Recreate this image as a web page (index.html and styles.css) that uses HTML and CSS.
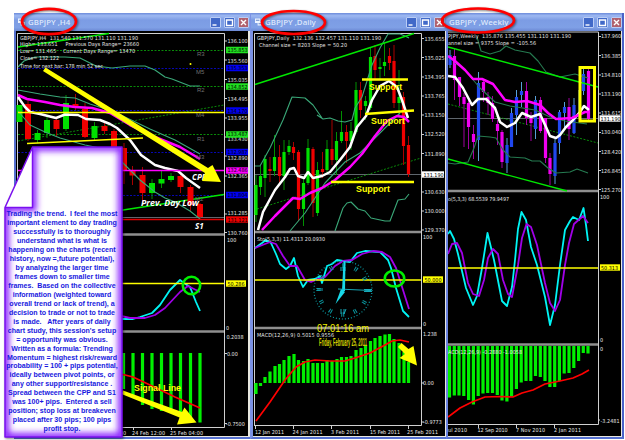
FILE: index.html
```
<!DOCTYPE html>
<html lang="en">

<head>
    <meta charset="utf-8" />
    <title>GBPJPY charts</title>
    <link rel="stylesheet" href="styles.css">
</head>

<body>
    <div class="desktop">
        <!-- H4 window -->
        <section class="window h4">
            <header class="titlebar">
                <svg class="app-icon" viewBox="0 0 8 8"><path d="M0 0h6v5H0zM3 4h5v4H3z" fill="#eef4ff"/><path d="M1 2h4M4 6h3" stroke="#5378bd"/></svg>
                <h2>GBPJPY ,H4</h2>
                <span class="btn"><svg viewBox="0 0 11 11"><path d="M2.5 8h4"/></svg></span>
                <span class="btn"><svg viewBox="0 0 11 11"><path d="M2.5 3h6v5.5h-6z"/></svg></span>
                <span class="btn close"><svg viewBox="0 0 11 11"><path d="M3 3l5 5M8 3l-5 5"/></svg></span>
            </header>
            <svg class="chart" viewBox="16 31 232 405" width="232" height="405">
                <path class="sep" d="M17 234.5H224M17 331.5H224"/>
                <path class="frame" d="M17.5 427V33.5H224.5V427.5H17"/>
                <path class="price" d="M18 217.5H224"/>
                <path class="pivot green" d="M18 50.5H224M18 86.5H224M18 134.5H224"/>
                <path class="pivot blue" d="M18 68.5H224M18 110.5H224M18 152.5H224M18 195.5H224"/>
                <path class="pivot green" d="M18 141L224 105"/>
                <path class="trend" d="M18 47L109 33.5M110 212L224 194.5"/>
                <path class="wick up" d="M37.5 130V143M47 117V138M66 95V131M94.500 122V141M152 179V199M161.500 171V188M171 173V182"/>
                <path class="wick down" d="M28 98V141M56.500 117V136M75.500 94V110M85 103V138M104.500 123V134M114 129V150M124 143V184M132.500 166V185M142.500 167V202M180.500 172V193M190.500 185V212M200 203V219"/>
                <path class="body up wide" d="M19.500 105V122M37.500 133V140M47 120V133M66 103V129M94.500 126V138M152 183V193M161.500 179V183.500M171 176V180"/>
                <path class="body down wide" d="M28 104V139M56.500 120V129M75.500 104V108M85 109V137M104.500 126V131M114 131V147M124 148V170M132.500 171V175.500M142.500 175V193M180.500 176V187M190.500 187V205M200 204V217"/>
                <path class="band" d="M18 67L24 61 35 57H65L80 58 86 61 96 66 112 68 130 66H145L155 70 165 77 172 79 190 86H200"/>
                <path class="band" d="M18 90L40 94 60 97 75 98 90 104 115 112 125 117 150 129 175 140 200 154"/>
                <path class="band" d="M18 111L30 125 45 132 60 138 85 145 110 150 122 162 140 180 155 192 165 198 175 202 190 211 200 219"/>
                <path class="ma magenta" d="M18 95L27 99 45 102 60 105 75 107 92 108 110 113 130 125 155 137 180 147 200 159"/>
                <path class="ma white" d="M18 97L25 107 30 112 40 114 56 118 65 114.500 78 115 86 119 100 120 110 124 117 128 130 140 141 155 155 165 165 168 178 171 186 178 200 188"/>
                <path class="hline magenta" d="M18 170.500H224"/>
                <path class="hline yellow" d="M18 112.500H224"/>
                <path class="hline red" d="M18 219.500H224"/>
                <path class="hline yellow" d="M27 143.500L143 138"/>
                <g class="info">
                    <text x="20" y="40" textLength="118">GBPJPY,H4&#160; 131.540 131.570 131.110 131.190</text>
                    <text x="20" y="46.300" textLength="119">High= 133.651 &#160;&#160;&#160; Previous Days Range= 23660</text>
                    <text x="20" y="53.300" textLength="115">Low= 131.465 &#160;&#160; Current Days Range= 13470</text>
                    <text x="20" y="60.300" textLength="39">Close= 132.122</text>
                    <text x="20" y="67.600" textLength="83">Time for next bar: 178 min 52 sec</text>
                </g>
                <g class="pivot-name">
                    <text x="197" y="56">R3</text><text x="196" y="74">M5</text><text x="197" y="92">R2</text>
                    <text x="196" y="117">M4</text><text x="197" y="140.500">R1</text><text x="196" y="158.500">M3</text><text x="195" y="201">M2</text>
                </g>
                <circle cx="190.500" cy="64" r="1" fill="#ff0"/>
                <g class="caption pale">
                    <text x="192" y="179.500">CPP</text>
                    <text x="141" y="205.500" textLength="58" lengthAdjust="spacingAndGlyphs">Prev. Day Low</text>
                    <text x="195" y="228.500">S1</text>
                </g>
                <path class="arrow" d="M45.500 67.500L208 168 212.500 165 221 182 202 181 205 173 43 71z"/>
                <path class="osc cyan" d="M110 312L121 319H133L140 317 152 313 160 305 170 290 180 280 184 283 190 287 196 302 200 311"/>
                <path class="osc purple" d="M110 312L121 316 130 318H145L155 315 165 308 180 292 188 286 200 292"/>
                <path class="hline yellow" d="M18 283.500H224"/>
                <circle class="ring" cx="191.500" cy="285.500" r="8.700"/>
                <path class="bar" d="M123.500 353V389M133 353V395M142.500 353V405M152 353V409M161.500 353V411M171 353V412M180.500 353V414M190.500 353V418M200 353V422.500"/>
                <path class="signal" d="M115 373L121 374 133 377 150 385 175 397 200 408"/>
                <path class="arrow" d="M123 390.500L182 412 184.500 407.500 196.500 422.500 177 424.500 179.500 417.500 121.500 394z"/>
                <text class="caption" x="134" y="390.500" textLength="47" lengthAdjust="spacingAndGlyphs">Signal Line</text>
                <path class="tick" d="M224 41h3M224 60h3M224 79.500h3M224 98.500h3M224 118h3M224 137h3M224 156h3M224 176h3M224 214h3M224 232.500h3M224 353.500h3M224 423.500h3M133.500 427v3M171.500 427v3"/>
                <g class="axis">
                    <text x="227.500" y="43">136.100</text><text x="227.500" y="62.500">135.560</text><text x="227.500" y="81.500">135.035</text>
                    <text x="227.500" y="100.500">134.495</text><text x="227.500" y="120">133.955</text><text x="227.500" y="141">133.430</text>
                    <text x="227.500" y="159.500">132.890</text><text x="227.500" y="178">132.365</text><text x="227.500" y="215">131.285</text>
                    <text x="227.500" y="234.700">130.760</text><text x="227" y="241.500">100</text><text x="226" y="329.500">0</text>
                    <text x="226.500" y="339">0.2038</text><text x="227" y="355.500">0.00</text><text x="226" y="425.500">-0.7500</text>
                    <text x="120" y="434.500">00</text><text x="132" y="434.500" textLength="33">24 Feb 12:00</text><text x="170" y="434.500" textLength="33">25 Feb 04:00</text>
                </g>
                <path class="tag green" d="M226 50h22M226 86.500h22M226 134.500h22"/>
                <path class="tag blue" d="M226 68h22M226 110.500h22M226 152h22M226 195h22"/>
                <path class="tag magenta" d="M226 170.500h22"/>
                <path class="tag red" d="M226 219.500h22"/>
                <path class="tag yellow" d="M226 283.500h20"/>
                <g class="axis dark">
                    <text x="227.500" y="52">135.853</text><text x="227.500" y="70">135.353</text><text x="227.500" y="88.500">134.852</text>
                    <text x="227.500" y="112.500">134.170</text><text x="227.500" y="136">133.487</text><text x="227.500" y="154">132.987</text>
                    <text x="227.500" y="172">132.486</text><text x="227.500" y="197">131.804</text><text x="227.500" y="221.500">131.121</text>
                    <text x="227.500" y="285.500">50.286</text>
                </g>
            </svg>
        </section>

        <!-- Daily window -->
        <section class="window daily">
            <header class="titlebar">
                <svg class="app-icon" viewBox="0 0 8 8"><path d="M0 0h6v5H0zM3 4h5v4H3z" fill="#eef4ff"/><path d="M1 2h4M4 6h3" stroke="#5378bd"/></svg>
                <h2>GBPJPY ,Daily</h2>
                <span class="btn"><svg viewBox="0 0 11 11"><path d="M2.5 8h4"/></svg></span>
                <span class="btn"><svg viewBox="0 0 11 11"><path d="M2.5 3h6v5.5h-6z"/></svg></span>
                <span class="btn close"><svg viewBox="0 0 11 11"><path d="M3 3l5 5M8 3l-5 5"/></svg></span>
            </header>
            <svg class="chart" viewBox="253 31 192 405" width="192" height="405">
                <path class="sep" d="M254 232H421M254 328H421"/>
                <path class="frame" d="M254.500 426V33.500H421.500V425.500H254"/>
                <path class="price" d="M255 174.500H421"/>
                <path class="pivot green" d="M257 209L421 158"/>
                <path class="wick up" d="M256 175V222M260.500 166V195M265 155V197M274.500 135V176M284 140V190M289 140V155M303.500 177V226M308 139V185M317.500 162V216M327 140V172M336.500 132V175M341.500 111V143M351 122V150M356 82V134M365.500 96V120M370.500 48V110M380 58V79M384.500 43V76M399 70V118"/>
                <path class="wick down" d="M270 157V182M279.500 145V184M293.500 142V160M298.500 150V221M313 147V217M322.500 152V178M332 120V165M346.500 125V163M360.500 82V118M375 45V80M389.500 48V70M394 45V108M403.500 92V165M408.500 136V177"/>
                <path class="body up" d="M256 185V215M260.500 176V187M265 159V178M274.500 157V171M284 152V176M289 146V152M303.500 183V209M308 148V183M317.500 170V213M327 149V170M336.500 141V160M341.500 132V141M351 131V141M356 90V132M365.500 101V106M370.500 57V108M380 67V69M384.500 62V66M399 97V103"/>
                <path class="body down" d="M270 169V171M279.500 157V176M293.500 147V153M298.500 152V209M313 149V203M322.500 169V172M332 149V160M346.500 132V141M360.500 90V110M375 56V70M389.500 56V63M394 61V103M403.500 97V146M408.500 145V174"/>
                <path class="band" d="M255 166H260L270 148 283 120 292 97 305 98 313 105 322 118M317 115L323 119 330 118 338 121 345 122 352 120 355 108 362 97 372 65 380 48 388 34H400L405 36 409 38"/>
                <path class="band" d="M290 231L305 213 325 183 345 162 360 153 375 138 390 123 400 113"/>
                <path class="band" d="M335 231L343 208 347 203 351 202 358 209 365 211 371 218 385 221H390L398 200 405 199 409 194"/>
                <path class="trend" d="M255 84.500L414 33.500"/>
                <path class="ma magenta" d="M262 230L275 216 293 198 300 199 310 193 322 188 335 180 350 167 362 154 375 136 387 121 397 116 404 117 409 122"/>
                <path class="ma white" d="M258 230L263 212 275 190 285 177 290 169 294 168 298 176 304 178 308 172 313 178 322 176 330 172 340 160 350 147 357 127 366 116 372 100 380 86 389 81 397 87 402 100 408 118"/>
                <path class="hline yellow thick" d="M362 79.500H408M365 114L414 110.500M331 182H414"/>
                <g class="caption">
                    <text x="369" y="90" textLength="33" lengthAdjust="spacingAndGlyphs">Support</text>
                    <text x="371" y="123.500" textLength="34" lengthAdjust="spacingAndGlyphs">Support</text>
                    <text x="356" y="191.500" textLength="34" lengthAdjust="spacingAndGlyphs">Support</text>
                </g>
                <!-- stochastic with the desktop clock on top -->
                <path class="osc cyan" d="M255 248L262 243 266 240 271 243 276 254 280 264 286 269 290 266 294 258 298 276 303 287 308 280 315 279 320 276 322 283 327 266 332 264 337 260 343 261 350 262 357 253 365 251 380 252 388 260 391 268 396 288 403 311 409 317"/>
                <path class="osc purple" d="M255 248L270 242 276 244 283 256 290 266 297 266 305 280 311 282 318 279 325 277 335 266 343 261 352 260 362 254 373 251 382 252 390 257 396 268 403 290 409 309"/>
                <path class="hline yellow" d="M255 280H421"/>
                <g class="clock">
                    <circle class="minutes" cx="343" cy="290" r="29"/>
                    <circle class="numerals" cx="343" cy="290" r="24.500"/>
                    <path class="thin" d="M341 267v4M343 267v4M345 267v4M341 309v5M344 309v5M346 309l-2 5M318 288v3M320 288v3M322 288v3M364 289.500h8M364 291.500h8"/>
                    <path class="hand" d="M343.500 261H345.500L345 291H342z"/>
                    <path class="hand" d="M341 289L345 292 335.500 304z"/>
                    <path class="thin" d="M338 289L371 290.500"/>
                </g>
                <ellipse class="ring" cx="394.500" cy="278.500" rx="9.700" ry="8"/>
                <path class="bar" d="M256 383V394M260.500 383V386M265 383V377M270 383V371.500M275 383V366M279.500 383V364M284 383V360M289 383V356M294 383V354M298.500 383V360M303.500 383V361M308 383V359M313 383V363M317.500 383V363M322.500 383V363M327 383V360M332 383V361M337 383V359M341.500 383V357M346.500 383V357M351 383V356M356 383V350M361 383V348M365.500 383V346M370.500 383V341M375 383V338M380 383V336M385 383V334.500M389.500 383V334M394 383V339M399 383V343M404 383V352M408.500 383V362"/>
                <path class="signal" d="M256 421L270 402 285 380 296 367 305 362 315 360 330 361 345 361 355 358 370 353 385 345 392 341 400 340 409 342"/>
                <path class="arrow" d="M401.500 343L408.500 349 413.500 346 417 365.500 399.500 358 405 354 398 347z"/>
                <text class="time" x="317" y="331.500" textLength="52" lengthAdjust="spacingAndGlyphs">07:01:16 am</text>
                <text class="date" x="319" y="345.500" textLength="48" lengthAdjust="spacingAndGlyphs">Friday, February 25, 2011</text>
                <g class="info">
                    <text x="257" y="40" textLength="124">GBPJPY,Daily&#160; 132.136 132.457 131.110 131.190</text>
                    <text x="259" y="46.500" textLength="88">Channel size = 8203 Slope = 50.20</text>
                    <text x="257" y="240.500" textLength="68">Sto(5,3,3) 11.4313 20.0930</text>
                    <text x="257" y="337" textLength="77">MACD(12,26,9) 0.5015 0.9556</text>
                </g>
                <path class="tick" d="M421 38.500h3M421 57.500h3M421 77h3M421 96h3M421 115h3M421 134.500h3M421 153.500h3M421 192h3M421 211h3M421 230h3M421 383h3M421 422h3M255.500 426v3M293.500 426v3M331.500 426v3M370.500 426v3M408.500 426v3"/>
                <path class="tag pale" d="M422 174.500h22"/>
                <path class="tag yellow" d="M423 279.500h20"/>
                <g class="axis">
                    <text x="424.500" y="40.500">135.655</text><text x="424.500" y="59.500">135.025</text><text x="424.500" y="78.700">134.395</text>
                    <text x="424.500" y="98">133.765</text><text x="424.500" y="117">133.150</text><text x="424.500" y="136.300">132.520</text>
                    <text x="424.500" y="155.500">131.890</text><text x="424.500" y="193.700">130.630</text><text x="424.500" y="212.700">130.000</text>
                    <text x="424.500" y="232">129.370</text><text x="423" y="239">100</text><text x="423" y="325.500">0</text>
                    <text x="423" y="335.500">1.238</text><text x="423" y="385">0.00</text><text x="423" y="424">-0.9773</text>
                    <text x="255" y="434" textLength="29">12 Jan 2011</text><text x="292.500" y="434" textLength="30">24 Jan 2011</text>
                    <text x="331" y="434" textLength="28">3 Feb 2011</text><text x="370" y="434" textLength="30">15 Feb 2011</text><text x="407" y="434" textLength="31">25 Feb 2011</text>
                </g>
                <g class="axis dark">
                    <text x="423.500" y="176.500">131.190</text><text x="424.500" y="281.700">50.000</text>
                </g>
            </svg>
        </section>

        <!-- Weekly window -->
        <section class="window weekly">
            <header class="titlebar">
                <h2>GBPJPY ,Weekly</h2>
                <span class="btn"><svg viewBox="0 0 11 11"><path d="M2.5 8h4"/></svg></span>
                <span class="btn"><svg viewBox="0 0 11 11"><path d="M2.5 3h6v5.5h-6z"/></svg></span>
                <span class="btn close"><svg viewBox="0 0 11 11"><path d="M3 3l5 5M8 3l-5 5"/></svg></span>
            </header>
            <svg class="chart" viewBox="448 31 173 405" width="173" height="405">
                <path class="sep" d="M448 191H598M448 344.500H598"/>
                <path class="frame" d="M448 32H598.500V424.500H448"/>
                <path class="price" d="M448 118.500H598"/>
                <path class="pivot green" d="M448 104L598 143"/>
                <path class="wick sky" d="M450 50V68M478.500 72V161M507 138V173M511.500 108V147M516.500 90V135M521.500 82V107M535.500 96V139M555 139V184M559.500 110V154M564.500 102V129M574 98V134M579 90V118M583.500 68V95"/>
                <path class="wick plum" d="M454.500 48V100M459.500 77V106M464 93V147M468.500 98V149M473.500 125V159M483.500 80V102M488 92V115M492.500 96V122M497.500 120V145M502 130V168M526.500 82V125M531 112V141M540.500 97V133M545.500 118V163M550 153V185M569 98V140M588.500 68V120"/>
                <path class="body navy" d="M450 55V65M478.500 83V140M507 145V163M511.500 113V147M516.500 97V115M521.500 91V95M535.500 100V129M555 143V176M559.500 112V143M564.500 107V113M574 105V133M583.500 74V91"/>
                <path class="body pink" d="M454.500 56V80M459.500 77V97M464 97V104M468.500 103V127M473.500 134V142M483.500 82V92M488 97V103M492.500 103V119M497.500 124V131M502 132V162M526.500 91V118M531 118V123M540.500 100V131M545.500 118V158M550 158V174M569 107V129M588.500 71V119"/>
                <path class="band dim" d="M477 37L481 51 490 54 500 51 506 46 515 50 530 53 538 61 546 72 560 77 575 74 588 78"/>
                <path class="band dim" d="M455 63L463 68 480 88 495 102 510 106 535 110 550 117 565 121 587 124"/>
                <path class="band dim" d="M448 163L455 164 468 162 474 148 478 136 490 137 496 138 503 150 510 157 525 158 532 161 540 161 548 168 556 173 570 172 577 169 588 173"/>
                <path class="trend" d="M448 47L598 87M448 159L567 191"/>
                <path class="ma white" d="M448 76L455 77 463 88 472 105 478 99 486 99 495 108 500 122 507 127 515 123 522 113 531 117 540 114 546 127 550 136 556 138 560 135 566 127 573 120 580 112 584 106 589 110"/>
                <path class="ma magenta" d="M448 56L455 61 465 70 473 79 482 79 493 84 505 100 515 102 527 101 540 105 548 113 556 119 572 118 585 112 590 112"/>
                <path class="box" d="M580 67.500H594.500V121H580z"/>
                <path class="osc cyan" d="M448 234L450 231 454 239 458 254 466 288 473 305 477 296 482 268 487.500 233 494 260 502 301 507 306 512 287 515 260 518 229 521.500 212 526 220 531 247 537 265 545 297 550 325 555 305 560 265 565 230 570 221 573 217 579 220 583.500 208 586 225 588 241"/>
                <path class="osc purple" d="M448 254L452 244 457 243 462 253 468 283 473 294 479 296 484 280 488 258 493 249 498 254 503 280 508 294 512 297 518 265 522 238 526.500 224 531 227 537 245 545 283 550 303 555 311 560 300 565 265 569 243 574 224 583 216 588 223"/>
                <path class="hline yellow" d="M448 268H598"/>
                <path class="bar" d="M449.500 346V397.500M454.300 346V395.500M459 346V395.500M463.800 346V396M468.600 346V400M473.400 346V404.500M478.200 346V396M483 346V393.500M487.700 346V393M492.500 346V393M497.300 346V395M502 346V400.500M506.900 346V401.500M511.600 346V396.500M516.400 346V389M521.200 346V382.500M526 346V381M530.800 346V381M535.500 346V376M540.300 346V377M545 346V381M549.900 346V387M554.700 346V387M559.400 346V381M564.200 346V373.500M569 346V373M573.800 346V368M578.600 346V361M583.300 346V353M588 346V353.500"/>
                <path class="signal" d="M448 417L460 408 472 402 485 397 500 396.500 513 397 522 393 533 390 545 384 560 381 573 378 582 374 589 370"/>
                <g class="info">
                    <text x="448" y="38" textLength="123">PJPY,Weekly&#160; 135.876 135.455 131.110 131.190</text>
                    <text x="448" y="44.500" textLength="88">annel size = 9375 Slope = -105.56</text>
                    <text x="448" y="200.500" textLength="61">o(5,3,3) 68.5539 79.9497</text>
                    <text x="448" y="353.500" textLength="74">ACD(12,26,9) -0.2880 -1.0058</text>
                </g>
                <path class="tick" d="M598 36.500h3M598 55.500h3M598 75h3M598 94h3M598 113h3M598 132.500h3M598 151.500h3M598 170.500h3M598 189.500h3M598 420h2M478.500 425v3M516.500 425v3M554.500 425v3"/>
                <g class="axis">
                    <text x="601" y="38.300">137.960</text><text x="601" y="57.500">136.385</text><text x="601" y="76.700">134.810</text>
                    <text x="601" y="96">133.190</text><text x="601" y="114.500">131.615</text><text x="601" y="134.300">130.040</text>
                    <text x="601" y="153.500">128.420</text><text x="601" y="172.500">126.845</text><text x="601" y="191.500">125.270</text>
                    <text x="600" y="198.700">100</text><text x="600" y="341.500">0</text><text x="600" y="351">0</text><text x="600.500" y="422.500" textLength="19">-3.2481</text>
                    <text x="448" y="432" textLength="19">ul 2010</text><text x="477.500" y="432" textLength="30">12 Sep 2010</text>
                    <text x="516" y="432" textLength="29">7 Nov 2010</text><text x="554" y="432" textLength="27">2 Jan 2011</text>
                </g>
                <path class="tag pale" d="M599.500 118.500h21"/>
                <path class="tag yellow" d="M600 267.500h20"/>
                <g class="axis dark">
                    <text x="600.500" y="120.500">131.190</text><text x="601" y="269.600">50.313</text>
                </g>
            </svg>
        </section>
    </div>

    <!-- red circles round the three titles -->
    <svg class="marks" viewBox="0 0 625 440">
        <ellipse cx="49" cy="21.500" rx="27" ry="12.700"/>
        <ellipse cx="293.500" cy="22.500" rx="31.500" ry="11.500"/>
        <ellipse cx="478" cy="20.500" rx="36" ry="12"/>
    </svg>

    <aside class="note">
        <svg class="paper" viewBox="0 0 120 294" width="120" height="294">
            <defs>
                <clipPath id="sheet"><path d="M28.500 1H118V291H1V61.500z"/></clipPath>
                <filter id="glow" x="-20%" y="-20%" width="140%" height="140%"><feGaussianBlur stdDeviation="3.200"/></filter>
            </defs>
            <path d="M28.500 1H118V291H1V61.500z" fill="#fff"/>
            <g clip-path="url(#sheet)">
                <path class="inner" d="M28.500 1H118V291H1V61.500H28.500z" filter="url(#glow)"/>
                <path d="M28.500 1V61.500H1z" fill="#fff"/>
            </g>
            <path class="edge" d="M28.500 1H118V291H1V61.500zM28.500 1V61.500H1"/>
        </svg>
        <p>Trading the trend.&#160; I feel the most<br>important element to day trading<br>successfully is to thoroughly<br>understand what is what is<br>happening on the charts (recent<br>history, now =,future potential),<br>by analyzing the larger time<br>frames down to smaller time<br>frames.&#160; Based on the collective<br>information (weighted toward<br>overall trend or lack of trend), a<br>decision to trade or not to trade<br>is made.&#160;&#160; After years of daily<br>chart study, this session's setup<br>= opportunity was obvious.<br>Written as a formula: Trending<br>Momentum = highest risk/reward<br>probability = 100 + pips potential,<br>ideally between pivot points, or<br>any other support/resistance .<br>Spread between the CPP and S1<br>was 100+ pips.&#160; Entered a sell<br>position; stop loss at breakeven<br>placed after 30 pips; 100 pips<br>profit stop.</p>
    </aside>
</body>

</html>
```

FILE: styles.css
```
body {
    margin: 0;
    width: 625px;
    height: 440px;
    overflow: hidden;
    position: relative;
    background: #fff;
    font-family: "Open Sans", "Liberation Sans", sans-serif;
}

/* three terminal windows side by side */
.desktop {
    display: flex;
    padding: 13px 0 0 14px;
}

.window {
    box-sizing: border-box;
    height: 426px;
    background: #e8e8e0;
    border: solid #5570d0;
    border-width: 0 0 2px 2px;
}

.h4 {
    width: 236px;
}

.daily {
    width: 196px;
    border-left-width: 3px;
    border-left-color: #7b92e4;
}

.weekly {
    width: 178px;
    border-left-color: #6a82e0;
    border-right: 2px solid #4a62c8;
}

.chart {
    display: block;
    background: #000;
}

/* title bar */
.titlebar {
    display: flex;
    align-items: center;
    gap: 3px;
    box-sizing: border-box;
    height: 18px;
    margin-left: -2px;
    padding: 0 1px 0 4px;
    background: linear-gradient(#6c8bdb, #9db8f2 15%, #7c9ce4 40%, #7fa0e6 80%, #6c89d4);
}

.weekly .titlebar {
    padding: 0 0 0 3px;
}

.titlebar h2 {
    flex: 1;
    margin: 0;
    font: 600 7.9px/10px "Open Sans", sans-serif;
    color: #dbe6fb;
    white-space: nowrap;
}

.app-icon {
    width: 7px;
    height: 8px;
}

.btn {
    flex: none;
    width: 11px;
    height: 11px;
    box-sizing: border-box;
    border: 1px solid #b9ccf5;
    border-radius: 1px;
    background: #4169c8;
}

.btn svg {
    display: block;
    width: 11px;
    height: 11px;
    margin: -1px;
    fill: none;
    stroke: #fff;
    stroke-width: 1.4;
}

.btn.close {
    background: #b0616f;
}

/* chart lines */
.chart path {
    fill: none;
}

.frame, .tick { stroke: #d0d0d0; }
.sep { stroke: #8f8f8f; stroke-width: 2.4; }
.price { stroke: #778089; stroke-width: .8; }
.pivot { stroke-dasharray: 2 1.5; stroke-width: .9; }
.pivot.green { stroke: #0a9a0a; }
.pivot.blue { stroke: #0808c8; }
.trend { stroke: #00e800; stroke-width: 1.4; }
.band { stroke: #3aa878; stroke-width: 1.1; }
.band.dim { stroke: #257a50; }
.ma { stroke-width: 2.5; stroke-linejoin: round; }
.ma.magenta, .hline.magenta { stroke: #f0f; }
.ma.white { stroke: #fff; }
.hline { stroke-width: 1.7; }
.hline.yellow { stroke: #ff0; }
.hline.red { stroke: #e00000; }
.hline.thick { stroke-width: 2.6; }
.trend, .band, .signal { stroke-linejoin: round; }

/* candles */
.wick { stroke-width: 1; }
.body { stroke-width: 3.2; }
.body.wide { stroke-width: 6; }
.up { stroke: #00e000; }
.down { stroke: #f00000; }
.wick.up { stroke: #009000; }
.wick.down { stroke: #a80000; }
.wick.sky { stroke: #58a0d8; }
.wick.plum { stroke: #a000a0; }
.navy { stroke: #2048f0; }
.pink { stroke: #f000f0; }

/* indicators */
.osc { stroke-width: 1.8; stroke-linejoin: round; }
.cyan { stroke: #00f4f4; }
.purple { stroke: #a000e8; }
.bar { stroke: #00f000; stroke-width: 3.2; }
.signal { stroke: #f00; stroke-width: 1.7; }
.ring { fill: none; stroke: #00f000; stroke-width: 2.6; }
.box { stroke: #ff0; stroke-width: 3; }

.chart .arrow {
    fill: #ff0;
}

/* chart texts */
.info, .axis {
    font-family: "DejaVu Sans Condensed", "DejaVu Sans", sans-serif;
    font-size: 5.4px;
    fill: #e8e8e8;
}

.axis.dark {
    fill: #000;
}

.pivot-name {
    font: 6px "Liberation Sans", sans-serif;
    fill: #707070;
}

.caption {
    font: bold 8.5px "Liberation Sans", sans-serif;
    fill: #ff0;
}

.caption.pale {
    font: italic bold 8px "Open Sans", sans-serif;
    fill: #fff;
}

.time {
    font: 10.5px "Liberation Sans", sans-serif;
    fill: #f4f000;
}

.date {
    font: bold 11px "Liberation Sans", sans-serif;
    fill: #d8d800;
}

.tag { stroke-width: 6.4; }
.tag.green { stroke: #20e020; }
.tag.blue { stroke: #0000f0; }
.tag.magenta { stroke: #f0f; }
.tag.red { stroke: #f00000; }
.tag.yellow { stroke: #ff0; }
.tag.pale { stroke: #fff; }

/* clock */
.minutes {
    fill: none;
    stroke: #0aa0a8;
    stroke-width: 1.2;
    stroke-dasharray: 1 2.04;
}

.numerals {
    fill: none;
    stroke: #0a98a0;
    stroke-width: 4.5;
    stroke-dasharray: 1 1 1 9.83;
    stroke-dashoffset: 1.5;
}

.chart .hand {
    fill: #18d8e8;
}

.thin {
    stroke: #18b8c8;
    stroke-width: .9;
}

/* overlays */
.marks {
    position: absolute;
    left: 0;
    top: 0;
    width: 625px;
    height: 440px;
    fill: none;
    stroke: #f00;
    stroke-width: 2.7;
    filter: drop-shadow(1px 1.5px 1px rgba(0, 0, 0, .5));
}

.note {
    position: absolute;
    left: 4px;
    top: 146px;
    width: 120px;
    height: 294px;
}

.paper {
    display: block;
    filter: drop-shadow(1.5px 1.5px 1px rgba(0, 0, 0, .5));
}

.inner {
    fill: none;
    stroke: #8a20ff;
    stroke-width: 8;
}

.edge {
    fill: none;
    stroke: #7a10f0;
    stroke-width: 1.5;
    stroke-linejoin: round;
}

.note p {
    position: absolute;
    left: 0;
    top: 64px;
    width: 116px;
    margin: 0;
    font: bold 7.05px/8.975px "Liberation Sans", Arial, sans-serif;
    color: #1818e0;
    text-align: center;
    white-space: nowrap;
}
```
